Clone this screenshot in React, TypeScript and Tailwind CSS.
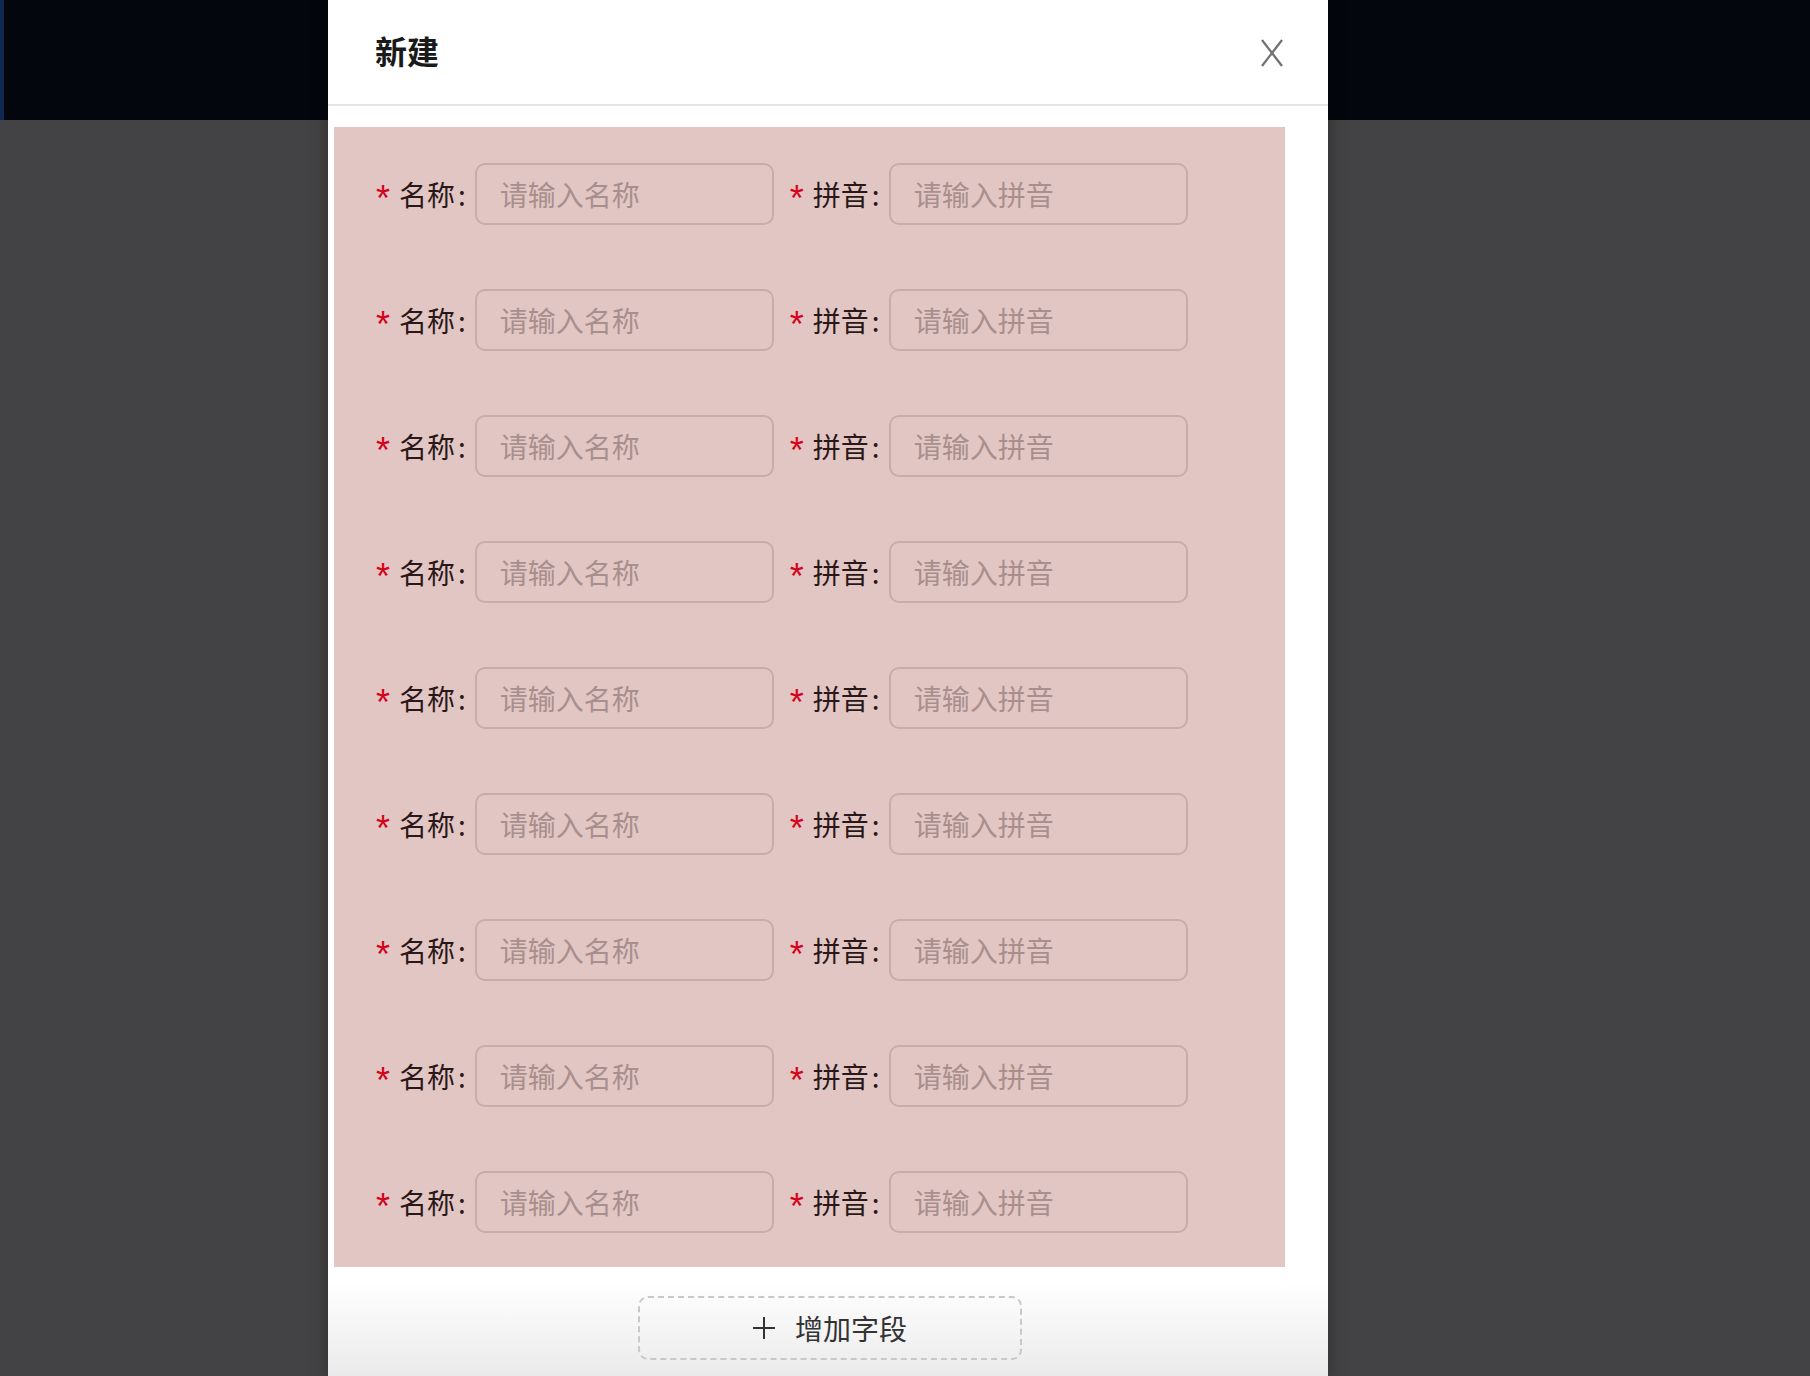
import React from "react";

const font = { fontFamily: '"Noto Sans CJK SC", "Noto Sans", sans-serif' };

function Field({ label, placeholder }: { label: string; placeholder: string }) {
  return (
    <div className="flex items-center h-[62px]">
      <span
        className="text-[#d4041c] text-[36px] leading-none w-[13px] mr-[10px] translate-y-[5px]"
        style={{ fontFamily: '"Liberation Sans", Arial, sans-serif' }}
      >
        *
      </span>
      <span className="text-[#2a1818] text-[28px] leading-none">{label}</span>
      <span className="text-[#2a1818] text-[28px] leading-none ml-[3px] mr-[9px]">:</span>
      <div className="w-[299px] h-[62px] rounded-[10px] border-2 border-[#c9acaa] flex items-center pl-[23px]">
        <span className="text-[#a88f8d] text-[28px] leading-none">{placeholder}</span>
      </div>
    </div>
  );
}

export default function App() {
  const rows = Array.from({ length: 9 });
  return (
    <div className="relative w-[1810px] h-[1376px] bg-[#434345] overflow-hidden" style={font}>
      <div className="h-[120px] bg-[#03070d] border-l-4 border-[#0f2850]" />
      <div className="absolute left-[328px] top-0 w-[1000px] h-[1376px] bg-white shadow-[0_0_16px_rgba(0,0,0,0.35)] flex flex-col">
        <div className="h-[106px] border-b-2 border-[#e6e6e6] flex items-center justify-between pl-[47px] pr-[44px] shrink-0">
          <span className="text-[32px] font-bold text-[#1a1a1a] leading-none -mt-[4px]">新建</span>
          <svg width="24" height="28" viewBox="0 0 24 28" className="mt-[1px]">
            <line x1="2" y1="1" x2="22" y2="27" stroke="#707070" strokeWidth="2.2" />
            <line x1="22" y1="1" x2="2" y2="27" stroke="#707070" strokeWidth="2.2" />
          </svg>
        </div>
        <div className="pt-[21px] pl-[6px] shrink-0">
          <div className="w-[951px] bg-[#e2c6c4] pt-[36px] pb-[34px] pl-[42px] flex flex-col gap-[64px]">
            {rows.map((_, i) => (
              <div key={i} className="flex items-center gap-[16px]">
                <Field label="名称" placeholder="请输入名称" />
                <Field label="拼音" placeholder="请输入拼音" />
              </div>
            ))}
          </div>
        </div>
        <div className="flex-1 bg-gradient-to-b from-white from-[15%] to-[#eaeaea] flex justify-center pt-[29px] pl-[4px]">
          <div className="w-[384px] h-[64px] rounded-[10px] border-2 border-dashed border-[#c8c8c8] flex items-center justify-center gap-[20px] text-[#333]">
            <svg width="22" height="22" viewBox="0 0 22 22">
              <line x1="11" y1="0" x2="11" y2="22" stroke="#333" strokeWidth="2" />
              <line x1="0" y1="11" x2="22" y2="11" stroke="#333" strokeWidth="2" />
            </svg>
            <span className="text-[28px] leading-none">增加字段</span>
          </div>
        </div>
      </div>
    </div>
  );
}
